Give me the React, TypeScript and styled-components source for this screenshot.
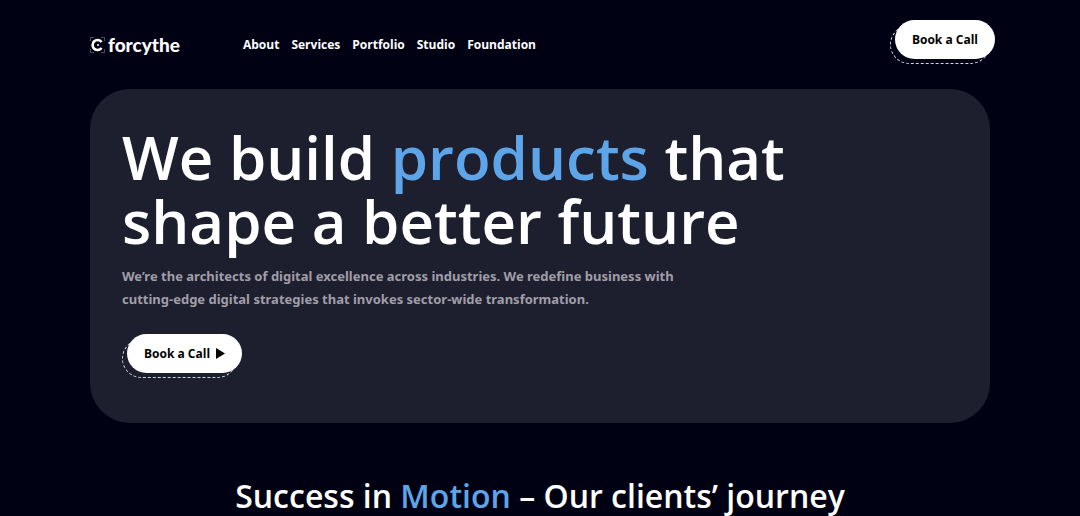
import React from "react";
import styled, { createGlobalStyle } from "styled-components";

const GlobalStyle = createGlobalStyle`
  *, *::before, *::after { box-sizing: border-box; }
  body {
    margin: 0;
    background: #010114;
    color: #fff;
    font-family: "Open Sans", "Noto Sans", sans-serif;
    overflow-x: hidden;
  }
`;

const Page = styled.div`
  max-width: 1280px;
  margin: 0 auto;
  padding: 0 90px;
`;

const Header = styled.header`
  display: flex;
  align-items: center;
  padding: 25px 0;
`;

const Logo = styled.a`
  display: flex;
  align-items: center;
  gap: 3px;
  width: 153px;
  color: #fff;
  font: 900 19px/20px "Lato", sans-serif;
  text-decoration: none;
`;

const Nav = styled.nav`
  display: flex;
  gap: 12px;
  flex: 1;
`;

const NavLink = styled.a`
  color: #fff;
  font-size: 12px;
  font-weight: 700;
  line-height: 20px;
  text-decoration: none;
`;

const DashedFrame = styled.div`
  display: inline-flex;
  vertical-align: top;
  border: 1px dashed #d4d4dc;
  border-radius: 20px;
`;

const CallButton = styled.button`
  display: flex;
  align-items: center;
  gap: 6px;
  height: 39px;
  margin: -6px -6px 4px 4px;
  padding: 0 17px;
  border: 0;
  border-radius: 20px;
  background: #fff;
  color: #000;
  font: 700 12px/20px "Open Sans", sans-serif;
`;

const Hero = styled.section`
  padding: 36px 32px 45px;
  border-radius: 40px;
  background: #1e1f2e;
`;

const Title = styled.h1`
  margin: 0;
  font-size: 60px;
  font-weight: 600;
  line-height: 64px;
`;

const Accent = styled.span`
  color: #5ea4e8;
`;

const Lead = styled.p`
  margin: 12px 0 28px;
  color: #a09ea8;
  font-family: "Noto Sans", "Open Sans", sans-serif;
  font-size: 13px;
  font-weight: 700;
  line-height: 23px;
`;

const Subtitle = styled.h2`
  margin: 50px 0 0;
  font-size: 32px;
  font-weight: 600;
  line-height: 46px;
  text-align: center;
`;

const links = ["About", "Services", "Portfolio", "Studio", "Foundation"];

export default function App() {
  return (
    <Page>
      <GlobalStyle />
      <Header>
        <Logo href="#">
          <svg width="15" height="16" viewBox="0 0 15 16" fill="none" stroke="#fff">
            <path d="M11.6 5A5 5 0 1 0 11.600 11" strokeWidth="2.6" />
            <circle cx="8" cy="8" r="1" fill="#fff" stroke="none" />
            <path d="M.5 4V.5H4M11 .5h3.500V4M.5 12v3.500H4M11 15.500h3.500V12" strokeWidth=".6" opacity=".5" />
          </svg>
          forcythe
        </Logo>
        <Nav>
          {links.map((name) => (
            <NavLink href="#" key={name}>{name}</NavLink>
          ))}
        </Nav>
        <DashedFrame>
          <CallButton>Book a Call</CallButton>
        </DashedFrame>
      </Header>
      <Hero>
        <Title>We build <Accent>products</Accent> that<br />shape a better future</Title>
        <Lead>We’re the architects of digital excellence across industries. We redefine business with<br />cutting-edge digital strategies that invokes sector-wide transformation.</Lead>
        <DashedFrame>
          <CallButton>
            Book a Call
            <svg width="9" height="11" viewBox="0 0 9 11"><path d="M0 0 9 5.5 0 11Z" /></svg>
          </CallButton>
        </DashedFrame>
      </Hero>
      <Subtitle>Success in <Accent>Motion</Accent> – Our clients’ journey</Subtitle>
    </Page>
  );
}
